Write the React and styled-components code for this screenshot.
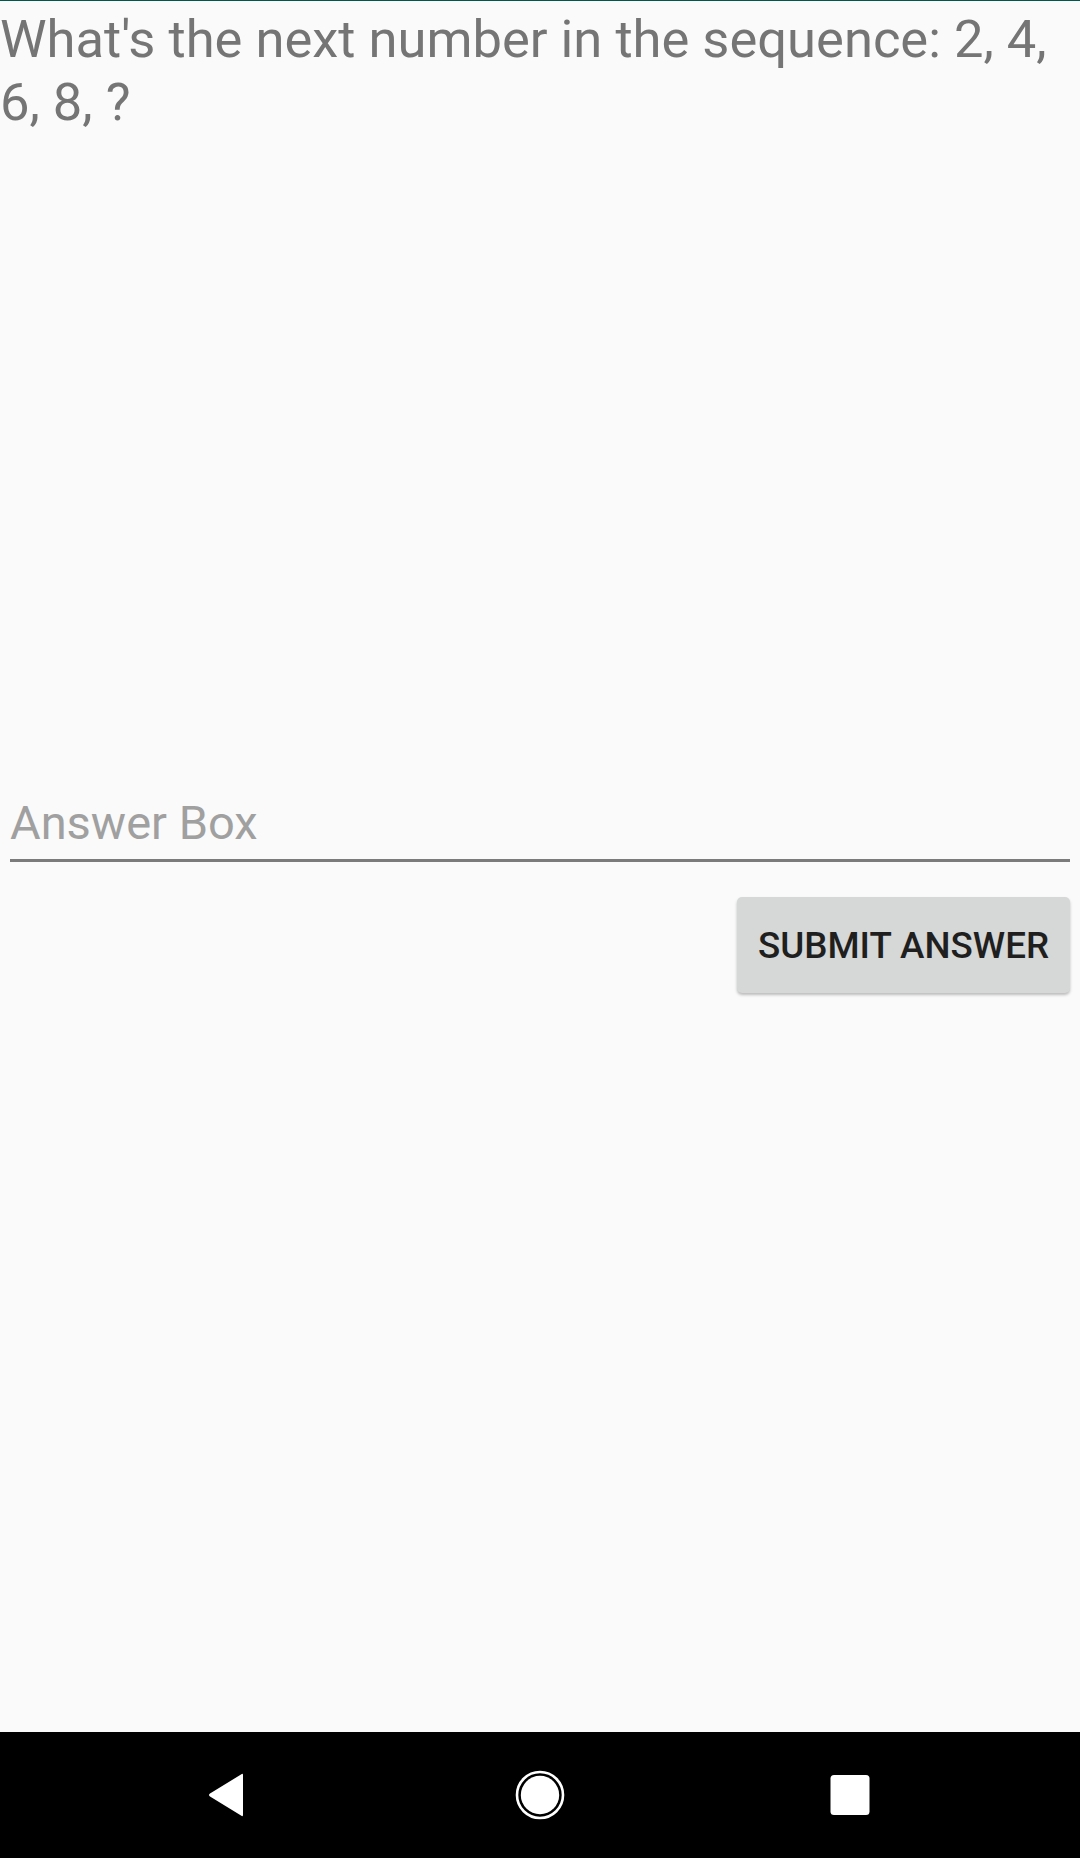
import React from "react";
import styled, { createGlobalStyle } from "styled-components";

const Global = createGlobalStyle`
  html, body { margin: 0; padding: 0; background: #fafafa; }
  #root { min-height: 1858px; }
  * { box-sizing: border-box; }
`;

const Screen = styled.div`
  display: flex;
  flex-direction: column;
  height: 1858px;
  background: #fafafa;
  border-top: 1px solid #00574b;
  font-family: Roboto, "Noto Sans", sans-serif;
`;

const Content = styled.main`
  flex: 1;
  display: flex;
  flex-direction: column;
`;

const Question = styled.p`
  margin: 0;
  padding: 7px 0 0 0;
  font-size: 52.5px;
  line-height: 63px;
  color: #757575;
  font-weight: 400;
`;

const Field = styled.div`
  margin: 651px 10px 0 10px;
  border-bottom: 3px solid #7b7b7b;
`;

const Input = styled.input`
  display: block;
  width: 100%;
  border: none;
  background: transparent;
  outline: none;
  padding: 0;
  height: 74px;
  font-family: Roboto, "Noto Sans", sans-serif;
  font-size: 47px;
  color: #212121;
  &::placeholder { color: #a0a0a0; }
`;

const Actions = styled.div`
  display: flex;
  justify-content: flex-end;
  padding: 35px 10px 0 0;
`;

const Button = styled.button`
  width: 333px;
  height: 96px;
  border: none;
  border-radius: 5px;
  background: #d6d7d7;
  box-shadow: 0 2px 3px rgba(0, 0, 0, 0.25);
  font-family: Roboto, "Noto Sans", sans-serif;
  font-weight: 500;
  font-size: 36.75px;
  letter-spacing: 0;
  color: #1f1f1f;
  padding: 0;
`;

const NavBar = styled.nav`
  height: 126px;
  background: #000;
  display: flex;
  align-items: center;
  justify-content: center;
`;

const NavSlot = styled.div`
  width: 310px;
  display: flex;
  justify-content: center;
  align-items: center;
  padding-right: ${(p) => p.$shift || 0}px;
`;

export default function App() {
  return (
    <>
      <Global />
      <Screen>
        <Content>
          <Question>What's the next number in the sequence: 2, 4, 6, 8, ?</Question>
          <Field>
            <Input placeholder="Answer Box" />
          </Field>
          <Actions>
            <Button>SUBMIT ANSWER</Button>
          </Actions>
        </Content>
        <NavBar>
          <NavSlot $shift={9}>
            <svg width="40" height="46" viewBox="0 0 40 46">
              <path
                d="M37 3 L37 43 Q37 45 35 43.5 L4 24.5 Q2 23 4 21.5 L35 2.5 Q37 1 37 3 Z"
                fill="#fff"
              />
            </svg>
          </NavSlot>
          <NavSlot>
            <svg width="52" height="52" viewBox="0 0 52 52">
              <circle cx="26" cy="26" r="23" fill="none" stroke="#fff" strokeWidth="2.6" />
              <circle cx="26" cy="26" r="19.2" fill="#fff" />
            </svg>
          </NavSlot>
          <NavSlot>
            <svg width="40" height="40" viewBox="0 0 40 40">
              <rect x="0.5" y="0" width="39" height="40" rx="3.5" fill="#fff" />
            </svg>
          </NavSlot>
        </NavBar>
      </Screen>
    </>
  );
}
